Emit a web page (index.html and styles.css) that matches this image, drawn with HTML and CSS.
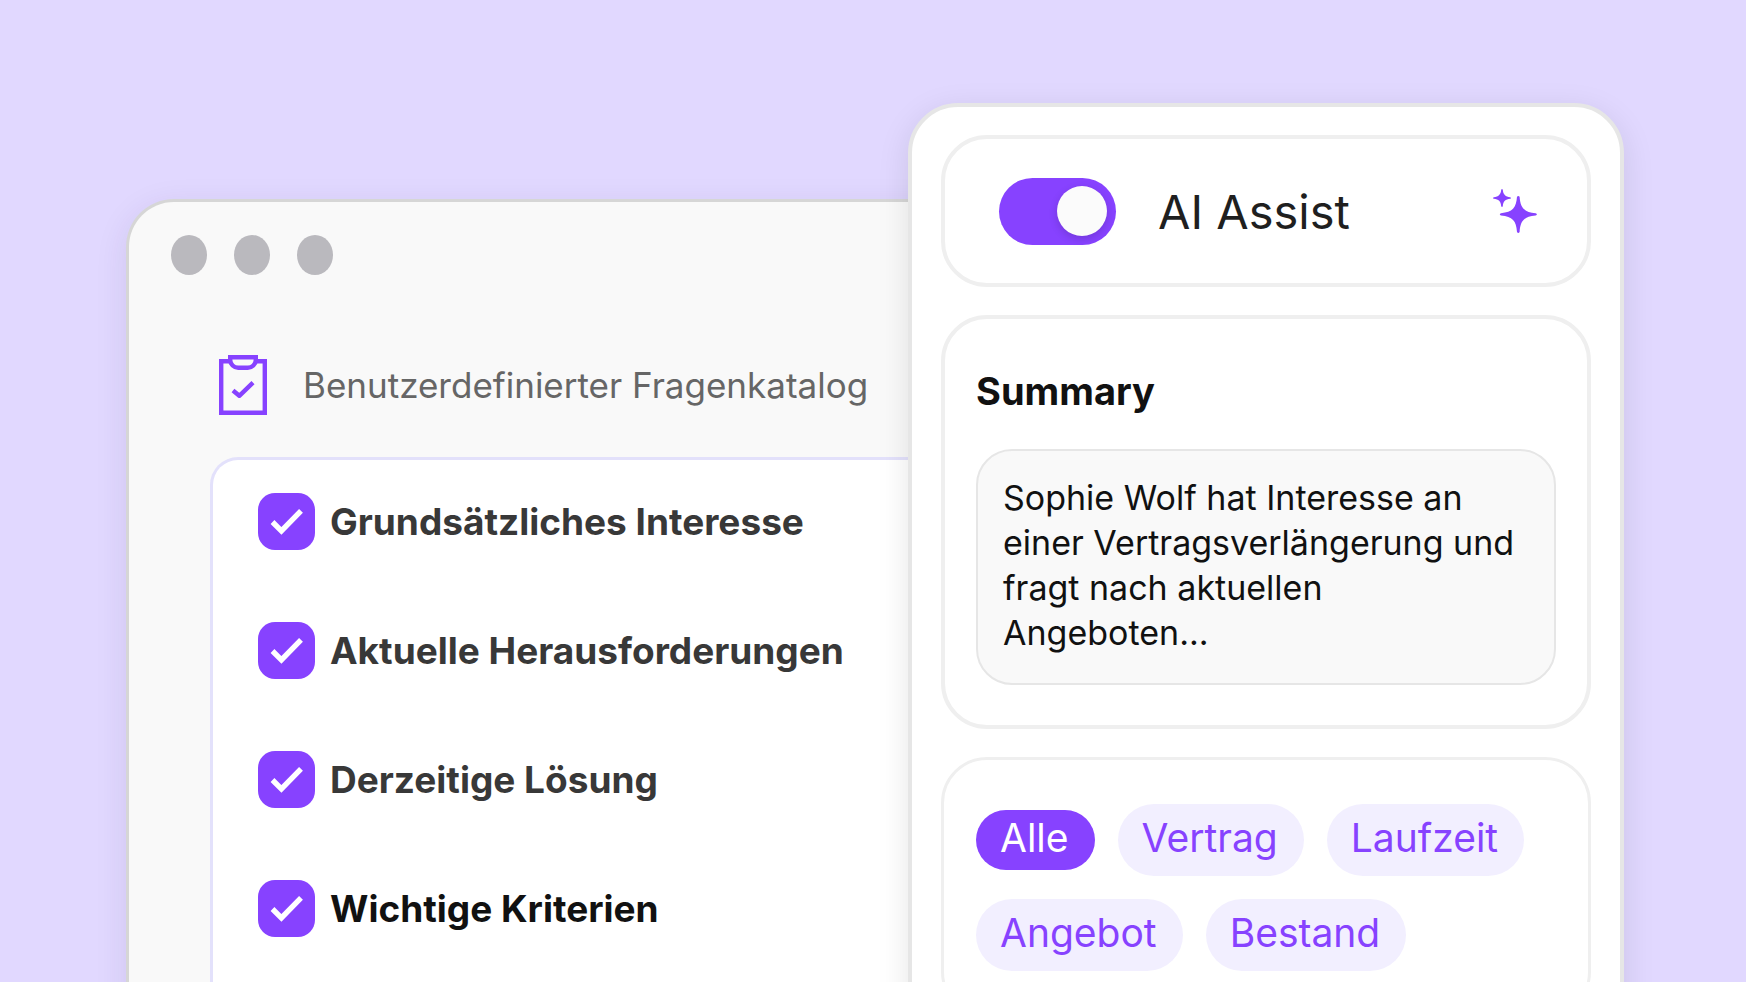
FILE: index.html
```
<!DOCTYPE html>
<html lang="de">
<head>
  <meta charset="UTF-8" />
  <meta name="viewport" content="width=device-width, initial-scale=1.0"/>
  <title>AI Assist</title>
  <link rel="stylesheet" href="styles.css">
</head>
<body>

  <main class="stage">
    <section class="window">
      <div class="window-dots">
        <span class="dot"></span>
        <span class="dot"></span>
        <span class="dot"></span>
      </div>

      <div class="catalog-header">
        <svg class="clipboard" viewBox="0 0 48 60" fill="none" stroke="currentColor" stroke-width="4.4" aria-hidden="true">
          <path d="M11 6.2H2.2V57.8H45.8V6.2H37"/>
          <path d="M11.2 2.2H36.8V5A8 8 0 0 1 28.8 12.8H19.2A8 8 0 0 1 11.2 5Z"/>
          <path d="M14 35.5L20.3 40.8L34 27.6" stroke-linejoin="round"/>
        </svg>
        <h1 class="catalog-title">Benutzerdefinierter Fragenkatalog</h1>
      </div>

      <div class="checklist">
        <label class="check-row">
          <span class="check">
            <input type="checkbox" checked>
            <svg viewBox="0 0 57 57" aria-hidden="true"><path d="M14.5 29L23.4 37.8L43 17.8"/></svg>
          </span>
          <span>Grundsätzliches Interesse</span>
        </label>
        <label class="check-row">
          <span class="check">
            <input type="checkbox" checked>
            <svg viewBox="0 0 57 57" aria-hidden="true"><path d="M14.5 29L23.4 37.8L43 17.8"/></svg>
          </span>
          <span>Aktuelle Herausforderungen</span>
        </label>
        <label class="check-row">
          <span class="check">
            <input type="checkbox" checked>
            <svg viewBox="0 0 57 57" aria-hidden="true"><path d="M14.5 29L23.4 37.8L43 17.8"/></svg>
          </span>
          <span>Derzeitige Lösung</span>
        </label>
        <label class="check-row current">
          <span class="check">
            <input type="checkbox" checked>
            <svg viewBox="0 0 57 57" aria-hidden="true"><path d="M14.5 29L23.4 37.8L43 17.8"/></svg>
          </span>
          <span>Wichtige Kriterien</span>
        </label>
      </div>
    </section>

    <aside class="panel">
      <div class="card assist">
        <input class="toggle" type="checkbox" role="switch" id="assist" checked>
        <label class="assist-label" for="assist">AI Assist</label>
        <svg class="sparkles" viewBox="0 0 44 44" fill="currentColor" aria-hidden="true">
          <path d="M8.2 0.8Q9 -0.6 9.8 0.8C10.2 5.6 12.4 7.8 17.2 8.2Q18.8 9 17.2 9.8C12.4 10.2 10.2 12.4 9.8 17.2Q9 18.8 8.2 17.2C7.8 12.4 5.6 10.2 0.8 9.8Q-0.8 9 0.8 8.2C5.6 7.8 7.8 5.6 8.2 0.8Z"/>
          <path d="M24 7.8Q25.3 6 26.6 7.8C27.4 19 31 23 42.6 24.2Q45.2 25.4 42.6 26.6C31 27.8 27.4 31.6 26.6 43Q25.3 45 24 43C23.2 31.6 19.6 27.8 8 26.6Q5.6 25.4 8 24.2C19.6 23 23.2 19 24 7.8Z"/>
        </svg>
      </div>

      <div class="card summary">
        <h2 class="summary-title">Summary</h2>
        <p class="summary-text">Sophie Wolf hat Interesse an einer Vertragsverlängerung und fragt nach aktuellen Angeboten...</p>
      </div>

      <div class="card filters">
        <button type="button" class="chip active">Alle</button>
        <button type="button" class="chip">Vertrag</button>
        <button type="button" class="chip">Laufzeit</button>
        <button type="button" class="chip">Angebot</button>
        <button type="button" class="chip">Bestand</button>
      </div>
    </aside>
  </main>

</body>
</html>
```
FILE: styles.css
```
* {
  box-sizing: border-box;
}

body {
  margin: 0;
  font-family: Inter, "Liberation Sans", sans-serif;
  background-color: white;
  overflow: hidden;
}

h1,
h2,
p {
  margin: 0;
}

.stage {
  display: grid;
  grid-template-columns: minmax(0, 126fr) minmax(0, 782fr) minmax(0, 716fr) minmax(0, 122fr);
  height: calc(100vh - 1px);
  background-color: #e1d8ff;
  overflow: hidden;
}

/* browser window, runs on behind the panel */
.window {
  grid-column: 2 / 4;
  grid-row: 1;
  display: flex;
  flex-direction: column;
  margin: 199px 80px 0 0;
  padding: 33px 0 0 42px;
  background-color: #f9f9f9;
  border: 3px solid #d6d6d6;
  border-bottom: 0;
  border-radius: 48px 48px 0 0;
  box-shadow: 0 8px 32px rgba(60, 40, 90, 0.1);
}

.window-dots {
  display: flex;
  gap: 27px;
}

.dot {
  width: 36px;
  height: 40px;
  border-radius: 50%;
  background-color: #bab9be;
}

.catalog-header {
  display: flex;
  align-items: center;
  gap: 36px;
  margin-top: 80px;
  padding-left: 48px;
}

.clipboard {
  flex: none;
  width: 48px;
  height: 60px;
  color: #8742ff;
}

.catalog-title {
  font-size: 35px;
  line-height: 45px;
  font-weight: 400;
  white-space: nowrap;
  color: #666;
}

.checklist {
  flex: 1;
  display: flex;
  flex-direction: column;
  gap: 72px;
  margin: 42px 0 0 39px;
  padding: 33px 0 0 45px;
  background-color: white;
  border: 3px solid #e3e1fb;
  border-bottom: 0;
  border-radius: 28px 0 0 0;
}

.check-row {
  display: flex;
  align-items: center;
  gap: 15px;
  font-size: 37px;
  line-height: 48px;
  font-weight: 700;
  color: #383838;
}

.check-row.current {
  color: #111;
}

.check {
  display: grid;
}

.check input,
.check svg {
  grid-area: 1 / 1;
  width: 57px;
  height: 57px;
}

.check input {
  appearance: none;
  margin: 0;
  border-radius: 17px;
  background-color: #8742ff;
}

.check svg {
  fill: none;
  stroke: white;
  stroke-width: 5.4;
  pointer-events: none;
}

/* assist panel */
.panel {
  grid-column: 3;
  grid-row: 1;
  position: relative;
  display: flex;
  flex-direction: column;
  gap: 28px;
  margin-top: 103px;
  padding: 28px 29px;
  background-color: white;
  border: 4px solid #e6e6e6;
  border-radius: 50px;
  box-shadow: 0 8px 32px rgba(0, 0, 0, 0.1);
}

.card {
  flex: none;
  border: 4px solid #efefef;
  border-radius: 46px;
}

.assist {
  display: flex;
  align-items: center;
  gap: 42px;
  height: 152px;
  padding: 0 50px 0 54px;
}

.toggle {
  appearance: none;
  flex: none;
  display: flex;
  align-items: center;
  justify-content: flex-end;
  width: 117px;
  height: 67px;
  margin: 0;
  padding-right: 9px;
  border-radius: 34px;
  background-color: #8742ff;
}

.toggle::before {
  content: "";
  width: 50px;
  height: 50px;
  border-radius: 50%;
  background-color: #fbfbfb;
  box-shadow: 0 3px 8px rgba(0, 0, 0, 0.15);
}

.toggle:not(:checked) {
  justify-content: flex-start;
  padding: 0 0 0 9px;
  background-color: #bab9be;
}

.assist-label {
  flex: 1;
  padding-top: 2px;
  font-size: 47px;
  line-height: 60px;
  color: #1f1f1f;
}

.sparkles {
  flex: none;
  width: 44px;
  height: 44px;
  color: #8742ff;
}

.summary {
  padding: 48px 31px 40px;
}

.summary-title {
  font-size: 38px;
  line-height: 48px;
  font-weight: 700;
  color: #111;
}

.summary-text {
  margin-top: 34px;
  padding: 24px 30px 28px 25px;
  font-size: 34px;
  line-height: 45px;
  color: #111;
  background-color: #f9f9f9;
  border: 2px solid #e6e6e6;
  border-radius: 36px;
}

.filters {
  display: flex;
  flex-wrap: wrap;
  align-items: center;
  gap: 23px;
  padding: 44px 32px;
  border-width: 3px;
}

.chip {
  padding: 10px 26px 14px 24px;
  font-family: inherit;
  font-size: 39px;
  line-height: 48px;
  color: #8742ff;
  background-color: #f2efff;
  border: 0;
  border-radius: 36px;
}

.chip.active {
  padding-top: 4px;
  padding-bottom: 8px;
  color: white;
  background-color: #8742ff;
}
```
